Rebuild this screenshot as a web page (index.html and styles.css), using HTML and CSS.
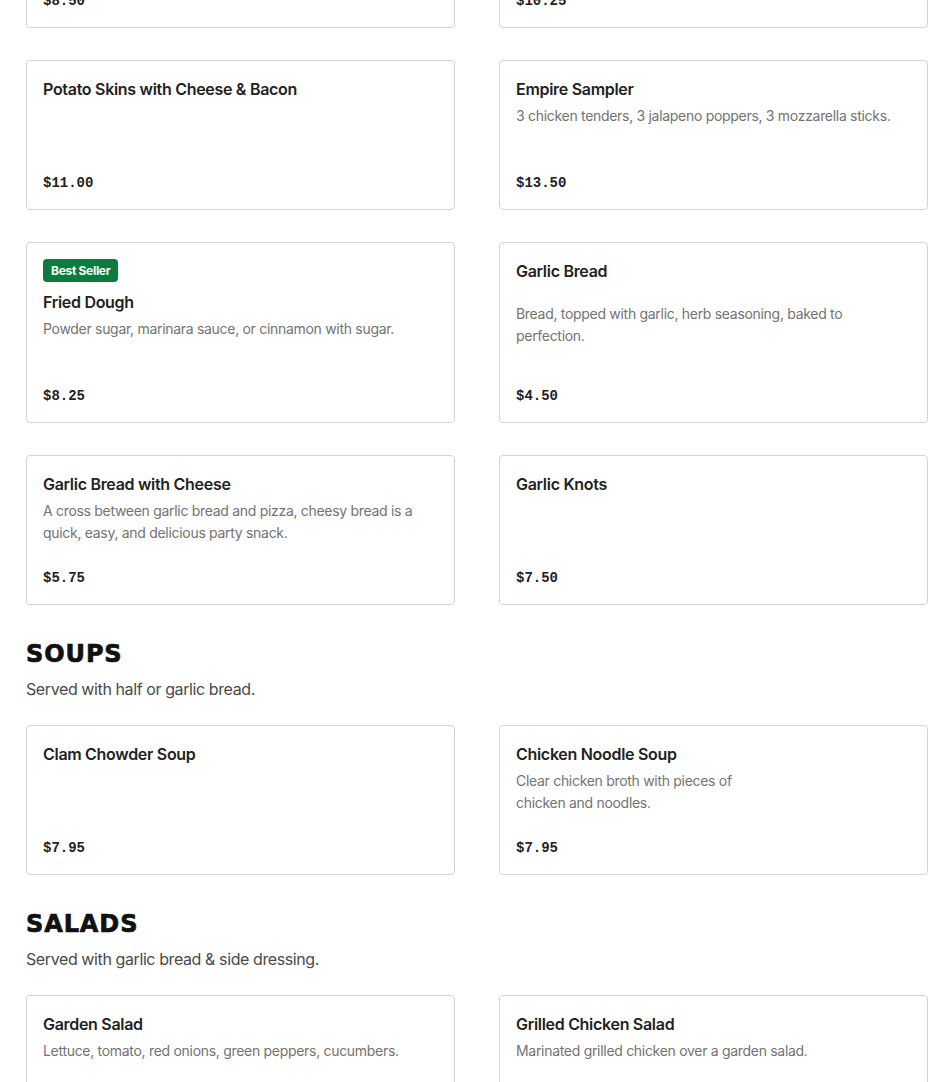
FILE: index.html
```html
<!DOCTYPE html>
<html lang="en">
<head>
<meta charset="utf-8">
<title>Menu</title>
<link rel="stylesheet" href="styles.css">
</head>
<body>
<main class="menu">
  <section class="section section--first">
    <div class="grid">
      <article class="card">
        <h3 class="card-title">Mozzarella Sticks</h3>
        <p class="card-desc">Served with marinara sauce.</p>
        <div class="card-price">$8.50</div>
      </article>
      <article class="card">
        <h3 class="card-title">Chicken Tenders</h3>
        <p class="card-desc">Served with honey mustard.</p>
        <div class="card-price">$10.25</div>
      </article>
      <article class="card">
        <h3 class="card-title">Potato Skins with Cheese &amp; Bacon</h3>
        <p class="card-desc"></p>
        <div class="card-price">$11.00</div>
      </article>
      <article class="card">
        <h3 class="card-title">Empire Sampler</h3>
        <p class="card-desc">3 chicken tenders, 3 jalapeno poppers, 3 mozzarella sticks.</p>
        <div class="card-price">$13.50</div>
      </article>
      <article class="card">
        <span class="badge">Best Seller</span>
        <h3 class="card-title">Fried Dough</h3>
        <p class="card-desc">Powder sugar, marinara sauce, or cinnamon with sugar.</p>
        <div class="card-price">$8.25</div>
      </article>
      <article class="card">
        <h3 class="card-title">Garlic Bread</h3>
        <p class="card-desc card-desc--spaced">Bread, topped with garlic, herb seasoning, baked to<br>perfection.</p>
        <div class="card-price">$4.50</div>
      </article>
      <article class="card">
        <h3 class="card-title">Garlic Bread with Cheese</h3>
        <p class="card-desc">A cross between garlic bread and pizza, cheesy bread is a<br>quick, easy, and delicious party snack.</p>
        <div class="card-price">$5.75</div>
      </article>
      <article class="card">
        <h3 class="card-title">Garlic Knots</h3>
        <p class="card-desc"></p>
        <div class="card-price">$7.50</div>
      </article>
    </div>
  </section>

  <section class="section">
    <h2 class="section-title">SOUPS</h2>
    <p class="section-sub">Served with half or garlic bread.</p>
    <div class="grid">
      <article class="card">
        <h3 class="card-title">Clam Chowder Soup</h3>
        <p class="card-desc"></p>
        <div class="card-price">$7.95</div>
      </article>
      <article class="card">
        <h3 class="card-title">Chicken Noodle Soup</h3>
        <p class="card-desc">Clear chicken broth with pieces of<br>chicken and noodles.</p>
        <div class="card-price">$7.95</div>
      </article>
    </div>
  </section>

  <section class="section">
    <h2 class="section-title">SALADS</h2>
    <p class="section-sub">Served with garlic bread &amp; side dressing.</p>
    <div class="grid">
      <article class="card">
        <h3 class="card-title">Garden Salad</h3>
        <p class="card-desc">Lettuce, tomato, red onions, green peppers, cucumbers.</p>
        <div class="card-price">$8.95</div>
      </article>
      <article class="card">
        <h3 class="card-title">Grilled Chicken Salad</h3>
        <p class="card-desc">Marinated grilled chicken over a garden salad.</p>
        <div class="card-price">$11.95</div>
      </article>
    </div>
  </section>
</main>
</body>
</html>
```
FILE: styles.css
```css
* { box-sizing: border-box; }
html, body { margin: 0; padding: 0; background: #fff; }
body {
  font-family: "Inter", "Liberation Sans", sans-serif;
  color: #222;
  overflow: hidden;
  height: 1082px;
}
.menu {
  width: 902px;
  margin-left: 26px;
}
.section { margin-top: 35px; }
.section--first { margin-top: -122px; }
.section-title {
  margin: 0;
  font-family: "DejaVu Sans", sans-serif;
  font-weight: 900;
  font-size: 24px;
  line-height: 28px;
  letter-spacing: 0.9px;
  -webkit-text-stroke: 0.7px #111;
  color: #111;
}
.section-sub {
  margin: 9px 0 24px;
  font-size: 16px;
  line-height: 24px;
  letter-spacing: -0.4px;
  color: #4a4a4a;
}
.grid {
  display: grid;
  grid-template-columns: 429px 429px;
  column-gap: 44px;
  row-gap: 32px;
}
.card {
  display: flex;
  flex-direction: column;
  align-items: flex-start;
  border: 1px solid #d4d4d4;
  border-radius: 4px;
  padding: 16px;
  min-height: 150px;
  background: #fff;
}
.badge {
  display: inline-block;
  background: #0b7b3e;
  color: #fff;
  font-size: 12px;
  font-weight: 700;
  letter-spacing: -0.3px;
  line-height: 23px;
  height: 23px;
  padding: 0 8px;
  border-radius: 4px;
  margin-bottom: 8px;
}
.card-title {
  margin: 0;
  font-size: 16px;
  font-weight: 600;
  line-height: 24px;
  letter-spacing: -0.3px;
  color: #222;
}
.card-desc {
  margin: 4px 0 0;
  min-height: 44px;
  font-size: 14px;
  line-height: 22px;
  letter-spacing: -0.3px;
  color: #737373;
}
.card-desc--spaced { margin-top: 20px; }
.card-price {
  margin-top: auto;
  padding-top: 24px;
  font-family: "Liberation Mono", monospace;
  font-weight: 700;
  font-size: 14px;
  line-height: 20px;
  color: #222;
}
```
